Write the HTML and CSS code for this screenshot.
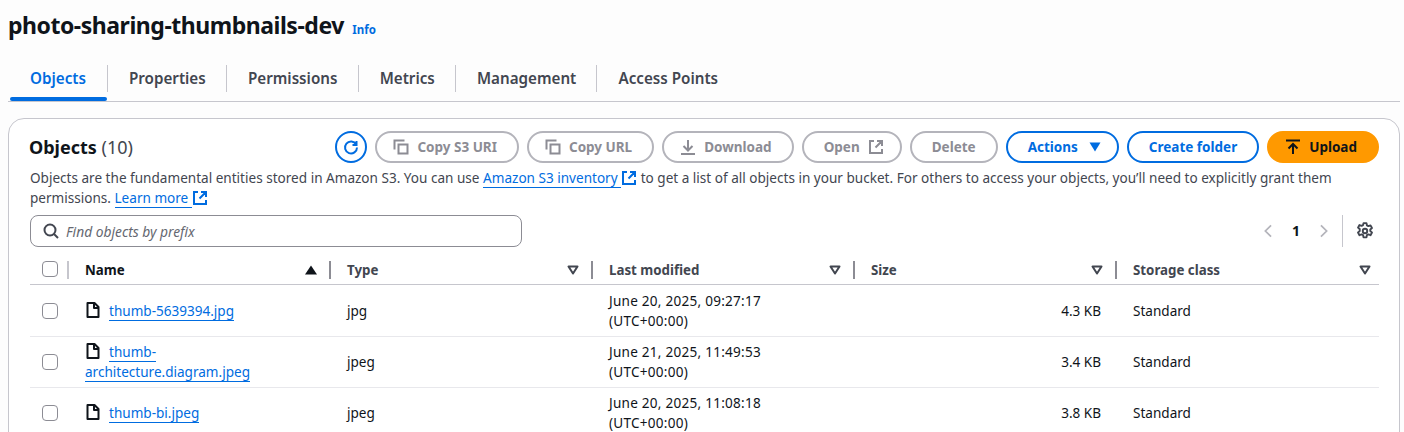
FILE: index.html
```html
<!DOCTYPE html>
<html lang="en">
<head>
    <meta charset="UTF-8">
    <title>photo-sharing-thumbnails-dev</title>
    <link rel="stylesheet" href="styles.css">
</head>
<body>
    <svg class="sprites" width="0" height="0">
        <symbol id="i-copy" viewBox="0 0 16 16"><path d="M5.500 5.500h9v9h-9z M1.500 10.500v-9h10" fill="none" stroke="currentColor" stroke-width="2"/></symbol>
        <symbol id="i-ext" viewBox="0 0 16 16"><path d="M6 2H2v12h12v-4 M9 2h5v5 M14 2L7.500 8.500" fill="none" stroke="currentColor" stroke-width="2"/></symbol>
        <symbol id="i-file" viewBox="0 0 16 16"><path d="M2.500 1h7l4 4v10h-11z M9 1v5h4.500" fill="none" stroke="currentColor" stroke-width="2" stroke-linejoin="round"/></symbol>
        <symbol id="i-sort" viewBox="0 0 12 10"><path d="M1.500 1.500h9L6 8.500z" fill="none" stroke="currentColor" stroke-width="2" stroke-linejoin="round"/></symbol>
    </svg>

    <h1 class="title">photo-sharing-thumbnails-dev <a class="info" href="#">Info</a></h1>

    <nav class="tabs">
        <a class="tab active" href="#">Objects</a>
        <a class="tab" href="#">Properties</a>
        <a class="tab" href="#">Permissions</a>
        <a class="tab" href="#">Metrics</a>
        <a class="tab" href="#">Management</a>
        <a class="tab" href="#">Access Points</a>
    </nav>

    <section class="card">
        <div class="card-head">
            <h2>Objects <span class="count">(10)</span></h2>
            <div class="actions">
                <button class="refresh" aria-label="Refresh">
                    <svg width="20" height="20" viewBox="0 0 20 20"><path d="M15.500 4v4h-4 M15.200 7.500A6 6 0 1 0 16 10.500" fill="none" stroke="currentColor" stroke-width="2"/></svg>
                </button>
                <button class="btn off lead"><svg class="ico"><use href="#i-copy"/></svg>Copy S3 URI</button>
                <button class="btn off lead"><svg class="ico"><use href="#i-copy"/></svg>Copy URL</button>
                <button class="btn off lead"><svg class="ico" viewBox="0 0 16 16"><path d="M8 1v10 M3.500 7L8 11.500 12.500 7 M1 15h14" fill="none" stroke="currentColor" stroke-width="2"/></svg>Download</button>
                <button class="btn off trail">Open<svg class="ico after"><use href="#i-ext"/></svg></button>
                <button class="btn off">Delete</button>
                <button class="btn normal trail">Actions<svg class="caret" viewBox="0 0 12 10"><path d="M0.500 0.500h11L6 9.500z" fill="currentColor"/></svg></button>
                <button class="btn normal">Create folder</button>
                <button class="btn primary lead"><svg class="ico" viewBox="0 0 16 16"><path d="M1 1.500h14 M8 15V5 M3.500 9.500L8 5l4.500 4.500" fill="none" stroke="currentColor" stroke-width="2"/></svg>Upload</button>
            </div>
        </div>

        <p class="desc">Objects are the fundamental entities stored in Amazon S3. You can use <a href="#"><span class="link-text">Amazon S3 inventory </span><svg class="ico-link"><use href="#i-ext"/></svg></a> to get a list of all objects in your bucket. For others to access your objects, you’ll need to explicitly grant them permissions. <a href="#"><span class="link-text">Learn more </span><svg class="ico-link"><use href="#i-ext"/></svg></a></p>

        <div class="filter-row">
            <label class="search">
                <svg class="search-ico" viewBox="0 0 16 16"><circle cx="7" cy="7" r="5.500" fill="none" stroke="currentColor" stroke-width="2"/><path d="M11 11l4 4" stroke="currentColor" stroke-width="2"/></svg>
                <span class="search-text">Find objects by prefix</span>
            </label>
            <div class="pager">
                <svg class="chev" viewBox="0 0 10 16"><path d="M8.500 1.500L2 8l6.500 6.500" fill="none" stroke="currentColor" stroke-width="2"/></svg>
                <span class="page-num">1</span>
                <svg class="chev" viewBox="0 0 10 16"><path d="M1.500 1.500L8 8l-6.500 6.500" fill="none" stroke="currentColor" stroke-width="2"/></svg>
                <span class="pager-sep"></span>
                <svg class="gear" viewBox="0 0 16 16"><path d="M6.700 1h2.600l.4 2 1.300.7 1.900-.7 1.300 2.300-1.500 1.300v1.500l1.500 1.300-1.300 2.300-1.900-.7-1.300.7-.4 2H6.700l-.4-2-1.300-.7-1.900.7-1.300-2.300 1.500-1.300V6.300L1.800 5l1.300-2.300 1.900.7 1.300-.7z" fill="none" stroke="currentColor" stroke-width="1.700" stroke-linejoin="round"/><circle cx="8" cy="8" r="2" fill="none" stroke="currentColor" stroke-width="1.700"/></svg>
            </div>
        </div>

        <table class="objects">
            <thead>
                <tr>
                    <th class="col-check"><span class="check"></span></th>
                    <th class="col-name"><div class="th-in dark">Name<svg class="sort-asc" viewBox="0 0 12 10"><path d="M0 9.500L6 .5l6 9z" fill="currentColor"/></svg></div></th>
                    <th class="col-type"><div class="th-in">Type<svg class="sort"><use href="#i-sort"/></svg></div></th>
                    <th class="col-date"><div class="th-in">Last modified<svg class="sort"><use href="#i-sort"/></svg></div></th>
                    <th class="col-size"><div class="th-in">Size<svg class="sort"><use href="#i-sort"/></svg></div></th>
                    <th class="col-class"><div class="th-in last">Storage class<svg class="sort"><use href="#i-sort"/></svg></div></th>
                </tr>
            </thead>
            <tbody>
                <tr class="first">
                    <td class="col-check"><span class="check"></span></td>
                    <td class="name"><svg class="file"><use href="#i-file"/></svg><a href="#">thumb-5639394.jpg</a></td>
                    <td>jpg</td>
                    <td class="date">June 20, 2025, 09:27:17<br>(UTC+00:00)</td>
                    <td class="num">4.3 KB</td>
                    <td>Standard</td>
                </tr>
                <tr>
                    <td class="col-check"><span class="check"></span></td>
                    <td class="name"><svg class="file"><use href="#i-file"/></svg><a href="#">thumb-<br>architecture.diagram.jpeg</a></td>
                    <td>jpeg</td>
                    <td class="date">June 21, 2025, 11:49:53<br>(UTC+00:00)</td>
                    <td class="num">3.4 KB</td>
                    <td>Standard</td>
                </tr>
                <tr>
                    <td class="col-check"><span class="check"></span></td>
                    <td class="name"><svg class="file"><use href="#i-file"/></svg><a href="#">thumb-bi.jpeg</a></td>
                    <td>jpeg</td>
                    <td class="date">June 20, 2025, 11:08:18<br>(UTC+00:00)</td>
                    <td class="num">3.8 KB</td>
                    <td>Standard</td>
                </tr>
            </tbody>
        </table>
    </section>
</body>
</html>
```

FILE: styles.css
```css
* {
    box-sizing: border-box;
}

html, body {
    height: 432px;
    overflow: hidden;
}

body {
    margin: 0;
    padding: 0 4px 0 8px;
    background-color: #fdfdfd;
    color: #0f141a;
    font-family: "Noto Sans", "Open Sans", sans-serif;
    font-size: 14px;
    line-height: 20px;
}

.sprites {
    position: absolute;
}

a {
    color: #006ce0;
    text-decoration: none;
}

.title {
    margin: 0;
    padding-top: 9px;
    height: 65px;
    font-size: 23px;
    line-height: 32px;
    font-weight: 700;
    letter-spacing: -0.47px;
}

.info {
    margin-left: 3px;
    font-size: 11.500px;
    font-weight: 700;
    letter-spacing: 0;
}

/* Tabs */
.tabs {
    display: flex;
    height: 37px;
    border-bottom: 1px solid #c6c6cd;
}

.tab {
    position: relative;
    height: 27px;
    padding: 0 20.200px 0 21px;
    border-left: 1px solid #c6c6cd;
    color: #424650;
    font-size: 15.200px;
    line-height: 26px;
    font-weight: 600;
}

.tab:first-child {
    border-left: 0;
    margin-left: 2px;
    padding: 0 21px 0 20px;
}

.tab.active {
    color: #006ce0;
}

.tab.active::after {
    content: "";
    position: absolute;
    left: 0;
    right: 0;
    top: 32px;
    height: 4px;
    border-radius: 2px;
    background-color: #006ce0;
}

/* Card */
.card {
    margin-top: 16px;
    height: 340px;
    padding: 12px 20px 0 21px;
    border: 1px solid #c6c6cd;
    border-radius: 16px;
    background-color: #fff;
}

.card-head {
    display: flex;
    justify-content: space-between;
    align-items: center;
    height: 32px;
}

.card-head h2 {
    margin: 0 0 0 -1px;
    font-size: 18px;
    line-height: 32px;
    font-weight: 700;
}

.count {
    color: #424650;
    font-weight: 400;
}

.actions {
    display: flex;
    align-items: center;
    gap: 8px;
}

.refresh {
    display: flex;
    align-items: center;
    justify-content: center;
    width: 32px;
    height: 32px;
    padding: 0;
    border: 2px solid #006ce0;
    border-radius: 50%;
    background-color: #fff;
    color: #006ce0;
}

.btn {
    display: flex;
    align-items: center;
    height: 32px;
    padding: 0 20px;
    border: 2px solid #b4b4bb;
    border-radius: 16px;
    background-color: #fff;
    font-family: inherit;
    font-size: 13.500px;
    font-weight: 700;
}

.btn.lead {
    padding-left: 16px;
}

.btn.trail {
    padding-right: 16px;
}

.btn.off {
    color: #8c8c94;
}

.btn.normal {
    border-color: #006ce0;
    color: #006ce0;
}

.btn.primary {
    border-color: #ff9900;
    background-color: #ff9900;
    color: #0f141a;
}

.ico {
    width: 16px;
    height: 16px;
    margin-right: 8px;
}

.ico.after {
    margin: 0 0 0 8px;
}

.caret {
    width: 12px;
    height: 10px;
    margin-left: 11px;
}

.desc {
    margin: 5px 0 0;
    height: 39px;
    color: #424650;
    font-size: 13.570px;
}

.link-text {
    border-bottom: 1px solid #006ce0;
}

.ico-link {
    width: 16px;
    height: 16px;
    margin: -4px 0;
    vertical-align: 1px;
}

.filter-row {
    display: flex;
    justify-content: space-between;
    align-items: center;
    margin-top: 8px;
    height: 32px;
}

.search {
    display: flex;
    align-items: center;
    width: 492px;
    height: 32px;
    padding-left: 12px;
    border: 1px solid #8c8c94;
    border-radius: 8px;
    color: #656871;
    font-size: 13.800px;
    font-style: italic;
}

.search-text {
    padding-top: 1px;
}

.search-ico {
    width: 16px;
    height: 16px;
    margin-right: 7px;
    color: #424650;
}

.pager {
    display: flex;
    align-items: center;
    padding-right: 5px;
    color: #b4b4bb;
}

.chev {
    width: 10px;
    height: 14px;
}

.page-num {
    margin: 0 19px;
    color: #0f141a;
    font-weight: 700;
}

.pager-sep {
    width: 1px;
    height: 32px;
    margin: 0 13px;
    background-color: #c6c6cd;
}

.gear {
    width: 18px;
    height: 18px;
    color: #424650;
}

/* Table */
.objects {
    width: 1349px;
    margin-top: 8px;
    border-collapse: collapse;
    table-layout: fixed;
}

.objects th {
    height: 29px;
    padding: 0;
    border-bottom: 1px solid #c6c6cd;
    color: #424650;
    text-align: left;
    font-size: 13.300px;
    font-weight: 700;
}

.col-check {
    width: 37px;
}

.col-name,
.col-type,
.col-date,
.col-size {
    width: 262px;
}

.th-in {
    display: flex;
    align-items: center;
    justify-content: space-between;
    height: 18px;
    margin-top: 1px;
    padding: 0 12px 0 16px;
    border-left: 2px solid #8c8c94;
}

.th-in.last {
    padding-right: 8px;
}

.th-in.dark {
    border-left-color: #c6c6cd;
    color: #0f141a;
}

.sort {
    width: 12px;
    height: 10px;
}

.sort-asc {
    width: 12px;
    height: 10px;
}

.objects td {
    height: 51px;
    padding: 0 0 0 18px;
    border-bottom: 1px solid #e8e8ec;
    color: #0f141a;
    font-size: 13.550px;
    vertical-align: middle;
}

.objects .first td {
    height: 52px;
    padding-top: 1px;
}

.objects td.col-check,
.objects th.col-check {
    padding-left: 12px;
}

.objects td.date {
    letter-spacing: 0.25px;
}

.objects td.num {
    padding-right: 14px;
    text-align: right;
}

.check {
    display: block;
    width: 16px;
    height: 16px;
    border: 1px solid #8c8c94;
    border-radius: 4px;
    background-color: #fff;
}

.file {
    width: 16px;
    height: 16px;
    margin-right: 8px;
    vertical-align: -2px;
}

.name a {
    border-bottom: 1px solid #006ce0;
}
```
